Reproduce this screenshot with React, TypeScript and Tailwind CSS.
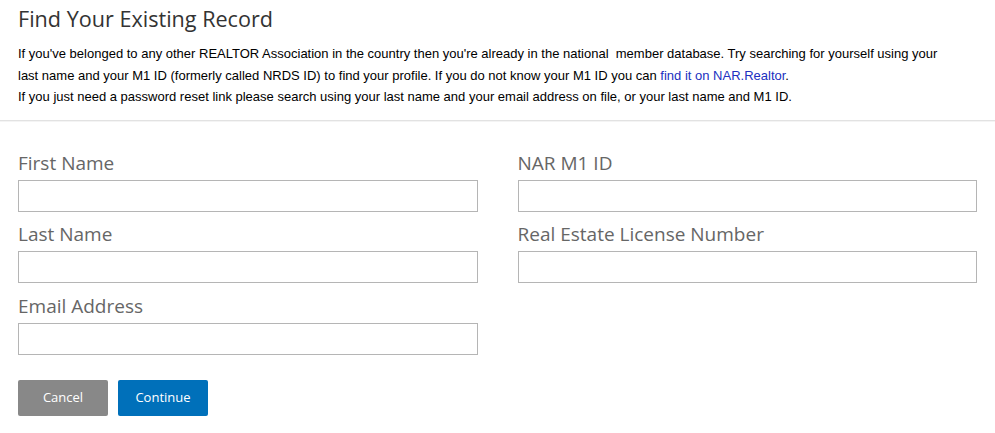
const fields = {
  left: ['First Name', 'Last Name', 'Email Address'],
  right: ['NAR M1 ID', 'Real Estate License Number'],
};

function Field({ label }: { label: string }) {
  return (
    <div className="flex flex-col">
      <label className="mb-[6px] text-[19px] leading-[22px] text-[#666] font-['Open_Sans',sans-serif]">{label}</label>
      <input type="text" className="h-[32px] w-full border border-[#b5b5b5] bg-white px-2 outline-none" />
    </div>
  );
}

export default function App() {
  return (
    <div className="min-h-[433px] w-full bg-white">
      <div className="border-b border-[#e2e2e2] px-[18px] pb-[12px] shadow-[0_1px_0_#f4f4f4]">
        <h1 className="pt-[4px] text-[21.6px] leading-[30px] text-[#333] font-['Open_Sans',sans-serif]">
          Find Your Existing Record
        </h1>
        <p className="mt-[9px] text-[13px] leading-[21.6px] text-black font-['Liberation_Sans',Arial,sans-serif] whitespace-nowrap">
          If you've belonged to any other REALTOR Association in the country then you're already in the national&nbsp; member database. Try searching for yourself using your
          <br />
          last name and your M1 ID (formerly called NRDS ID) to find your profile. If you do not know your M1 ID you can{' '}
          <a href="#" className="text-[#2030c0]">find it on NAR.Realtor</a>.
          <br />
          If you just need a password reset link please search using your last name and your email address on file, or your last name and M1 ID.
        </p>
      </div>

      <div className="px-[18px] pt-[31px]">
        <div className="grid grid-cols-2 gap-x-[40px]">
          <div className="flex flex-col gap-[11.5px]">
            {fields.left.map((f) => (
              <Field key={f} label={f} />
            ))}
          </div>
          <div className="flex flex-col gap-[11.5px]">
            {fields.right.map((f) => (
              <Field key={f} label={f} />
            ))}
          </div>
        </div>

        <div className="mt-[25px] flex gap-[10px] font-['Open_Sans',sans-serif]">
          <button className="h-[36px] w-[90px] rounded-[2px] bg-[#888] text-[13px] text-white">Cancel</button>
          <button className="h-[36px] w-[90px] rounded-[2px] bg-[#0070ba] text-[13px] text-white">Continue</button>
        </div>
      </div>
    </div>
  );
}
